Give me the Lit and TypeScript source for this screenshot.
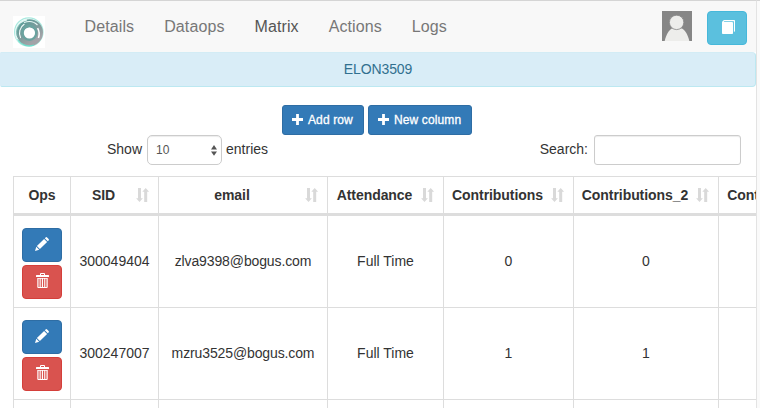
import { LitElement, html, css, svg } from "lit";
import { customElement, property } from "lit/decorators.js";

const shapes = {
  plus: svg`<path d="M4.1 0h2.8v4.1H11v2.8H6.9V11H4.1V6.9H0V4.1h4.1z"/>`,
  pencil: svg`<path d="M0 14l1.3-4.2 2.9 2.9zM1.9 9.1l7.2-7.2 3 3-7.2 7.2zM9.8 1.2l.8-.8q.7-.7 1.5 0l1.5 1.5q.7.8 0 1.5l-.8.8z"/>`,
  trash: svg`<path fill-rule="evenodd" d="M4 2V1q0-1 1-1h3q1 0 1 1v1h3.4q.6 0 .6.6V4H0V2.6Q0 2 .6 2zM5 2h3V1H5z"/><path d="M1.3 5h1.2v9H1.3zM3.6 5h1.1v9H3.6zM5.9 5H7v9H5.9zM8.2 5h1.1v9H8.2zM10.5 5h1.2v9h-1.2zM1.3 5h10.4v.8H1.3zM1.3 14h10.4q0 1-1 1H2.3q-1 0-1-1z"/>`,
  book: svg`<path d="M0 2.5Q0 1.6.8 1L1.6.3Q2 0 2.6 0h9.6q.8 0 .8.8v10.4l-1.1.9V1.2H2.4l-.8.9h8.5q.9 0 .9.9v10.2q0 .8-.9.8H.9Q0 14 0 13.2z"/>`,
  sort: svg`<path d="M2 0h3v10.3h1.9L3.5 14 .1 10.3H2zM8.2 14h3V3.7h1.9L9.7 0 6.3 3.7h1.9z"/>`,
  select: svg`<path d="M3 0L6 4.4H0zM0 6.4h6L3 10.8z"/>`,
};
type Shape = keyof typeof shapes;

const icon = (name: Shape, w: number, h: number) =>
  html`<svg class="icon" width=${w} height=${h} viewBox="0 0 ${w} ${h}" fill="currentColor">${shapes[name]}</svg>`;

@customElement("top-bar")
class TopBar extends LitElement {
  static styles = css`
    :host { display: flex; height: 51px; background: #f8f8f8; border-top: 1px solid #d5d5d5; box-sizing: content-box; }
    .logo { margin: 15px 24.6px 0 13px; width: 32px; height: 32px; background: #fff; }
    .logo svg, .icon { display: block; }
    nav { display: flex; flex: 1; }
    a { padding: 15px 15px 0; font-size: 16px; line-height: 22px; letter-spacing: .1px; color: #777; }
    a.active { color: #555; }
    .avatar { width: 30px; height: 30px; margin: 10px 15px 0 0; }
    .guide { display: flex; align-items: center; justify-content: center; box-sizing: border-box; width: 40px; height: 34px; margin: 10px 9px 0 0; padding: 0; border: 1px solid #46b8da; border-radius: 4px; background: #5bc0de; color: #fff; }
    .guide svg { margin-top: -2px; margin-left: 2px; }
  `;
  render() {
    return html`
      <div class="logo">
        <svg width="32" height="32" viewBox="0 0 32 32" fill="none">
          <defs>
            <linearGradient id="ring" x1="0" y1="0" x2=".7" y2="1">
              <stop offset="0" stop-color="#5d9c98"/>
              <stop offset=".55" stop-color="#7f9c9c"/>
              <stop offset="1" stop-color="#a3a3a8"/>
            </linearGradient>
          </defs>
          <circle cx="15.8" cy="16" r="14.2" stroke="#a9eadf" stroke-width="1.2"/>
          <circle cx="16.6" cy="16.6" r="9.3" stroke="url(#ring)" stroke-width="8.2"/>
          <circle cx="16.3" cy="16.8" r="6.8" stroke="#6aa39f" stroke-width="2.6"/>
          <path d="M5.4 25A13.4 13.4 0 0 1 14 3.8" stroke="#dff6f2" stroke-width="1.6"/>
          <path d="M7.6 22A11 11 0 0 1 11.4 8" stroke="#f4fcfb" stroke-width="1.1"/>
          <path d="M4.2 20A12.4 12.4 0 0 1 7.8 7.4" stroke="#76b5ae" stroke-width="1"/>
          <path d="M11 6.6Q19 3.4 24.5 9" stroke="#e9f8f5" stroke-width="1.1"/>
          <path d="M24.6 12.2Q27.3 17 25.4 22" stroke="#fff" stroke-width="1.5"/>
          <path d="M4.5 23.5A14 14 0 0 0 21 29" stroke="#6fdccb" stroke-width="1.2"/>
          <circle cx="16.4" cy="17" r="5.6" fill="#fff"/>
        </svg>
      </div>
      <nav><a>Details</a><a>Dataops</a><a class="active">Matrix</a><a>Actions</a><a>Logs</a></nav>
      <svg class="avatar" viewBox="0 0 30 30">
        <rect width="30" height="30" fill="#868686"/>
        <path d="M2.7 30C4.2 23 7.5 18.7 10 17.6h10c3 1.6 6 6.4 7.3 12.4z" fill="#ededeb"/>
        <circle cx="14.6" cy="11.4" r="7.2" fill="#ededeb" stroke="#868686" stroke-width=".8"/>
      </svg>
      <button class="guide">${icon("book", 13, 14)}</button>
    `;
  }
}

@customElement("data-matrix")
class DataMatrix extends LitElement {
  @property({ attribute: false }) columns: string[] = [];
  @property({ attribute: false }) rows: string[][] = [];
  static styles = css`
    :host { display: block; margin: 11px 0 0 13px; }
    .grid { display: grid; width: 851px; grid-template-columns: 57px 88px 169px 116px 130px 145px 146px; border-top: 1px solid #ddd; }
    .grid > div { display: flex; box-sizing: border-box; align-items: center; justify-content: center; border-left: 1px solid #ddd; border-bottom: 1px solid #ddd; }
    .grid > .head { height: 39px; padding: 0 8px; border-bottom: 3px solid #ddd; font-weight: bold; letter-spacing: -.06px; }
    .head span { flex: 1; text-align: center; white-space: nowrap; }
    .head .icon { flex: none; margin: 0 0 0 8px; color: #d9d9d9; }
    .grid > .cell { height: 92px; padding-bottom: 1px; }
    .grid > .email { letter-spacing: -.12px; }
    .grid > .ops { flex-direction: column; gap: 3px; padding: 4px 0 0; }
    button { display: flex; align-items: center; justify-content: center; box-sizing: border-box; width: 40px; height: 34px; padding: 0 0 2px; border: 1px solid #2e6da4; border-radius: 4px; background: #337ab7; color: #fff; }
    button.remove { border-color: #d43f3a; background: #d9534f; padding: 0 0 3px 1px; }
  `;
  render() {
    return html`<div class="grid">
      <div class="head"><span>Ops</span></div>
      ${this.columns.map((c) => html`<div class="head"><span>${c}</span>${icon("sort", 14, 14)}</div>`)}
      ${this.rows.map((r) => html`
        <div class="cell ops">
          <button>${icon("pencil", 14, 14)}</button>
          <button class="remove">${icon("trash", 13, 15)}</button>
        </div>
        ${r.map((v, i) => html`<div class=${i === 1 ? "cell email" : "cell"}>${v}</div>`)}`)}
    </div>`;
  }
}

@customElement("app-root")
class AppRoot extends LitElement {
  static styles = css`
    :host { display: block; box-sizing: border-box; width: 760px; height: 408px; overflow: hidden; background: #fff; color: #333; font: 14px/20px "Liberation Sans", Arial, sans-serif; }
    .frame { display: flex; height: 408px; }
    main { width: 756px; overflow: hidden; flex: none; }
    .gutter { flex: 1; background: #fafafa; border-left: 1px solid #e3e3e3; border-top: 1px solid #d5d5d5; }
    .banner { box-sizing: border-box; height: 35px; border: 1px solid #bce8f1; border-top-color: #d3ecf5; border-left-color: #d9edf7; border-radius: 1px 4px 4px 2px; background: #d9edf7; color: #31708f; text-align: center; line-height: 33px; letter-spacing: -.1px; }
    .actions { display: flex; justify-content: center; gap: 4px; margin-top: 18px; padding-right: 2px; }
    .actions button { display: flex; box-sizing: border-box; align-items: center; height: 30px; padding: 0 9px; border: 1px solid #2e6da4; border-radius: 3px; background: #337ab7; color: #fff; font: 12px/18px "Liberation Sans", Arial, sans-serif; letter-spacing: .12px; -webkit-text-stroke: .3px #fff; }
    .actions .add { width: 82px; }
    .actions .new { width: 104px; }
    .actions span { margin-left: 5px; white-space: nowrap; }
    .actions .icon { flex: none; margin-top: -1px; }
    .filters { display: flex; justify-content: space-between; align-items: center; height: 30px; padding: 0 15px 0 107px; }
    .filters label { display: flex; align-items: center; }
    .filters label span { margin-top: -2px; }
    .size { display: flex; box-sizing: border-box; align-items: center; justify-content: space-between; width: 75px; height: 30px; margin: 0 4px 0 5px; padding: 0 4px 0 8px; border: 1px solid #ccc; border-radius: 5px; font-size: 12px; color: #555; box-shadow: inset 0 1px 1px rgba(0,0,0,.075); }
    .size b { font-weight: normal; }
    .search { box-sizing: border-box; width: 147px; height: 30px; margin: 0 0 0 6px; border: 1px solid #ccc; border-radius: 3px; box-shadow: inset 0 1px 1px rgba(0,0,0,.075); }
  `;
  render() {
    return html`<div class="frame">
      <main>
        <top-bar></top-bar>
        <div class="banner">ELON3509</div>
        <div class="actions">
          <button class="add">${icon("plus", 11, 11)}<span>Add row</span></button>
          <button class="new">${icon("plus", 11, 11)}<span>New column</span></button>
        </div>
        <div class="filters">
          <label><span>Show</span><div class="size"><b>10</b>${icon("select", 6, 11)}</div><span>entries</span></label>
          <label><span>Search:</span><input class="search" /></label>
        </div>
        <data-matrix
          .columns=${["SID", "email", "Attendance", "Contributions", "Contributions_2", "Contributions_3"]}
          .rows=${[
            ["300049404", "zlva9398@bogus.com", "Full Time", "0", "0", ""],
            ["300247007", "mzru3525@bogus.com", "Full Time", "1", "1", ""],
            ["", "", "", "", "", ""],
          ]}
        ></data-matrix>
      </main>
      <div class="gutter"></div>
    </div>`;
  }
}
